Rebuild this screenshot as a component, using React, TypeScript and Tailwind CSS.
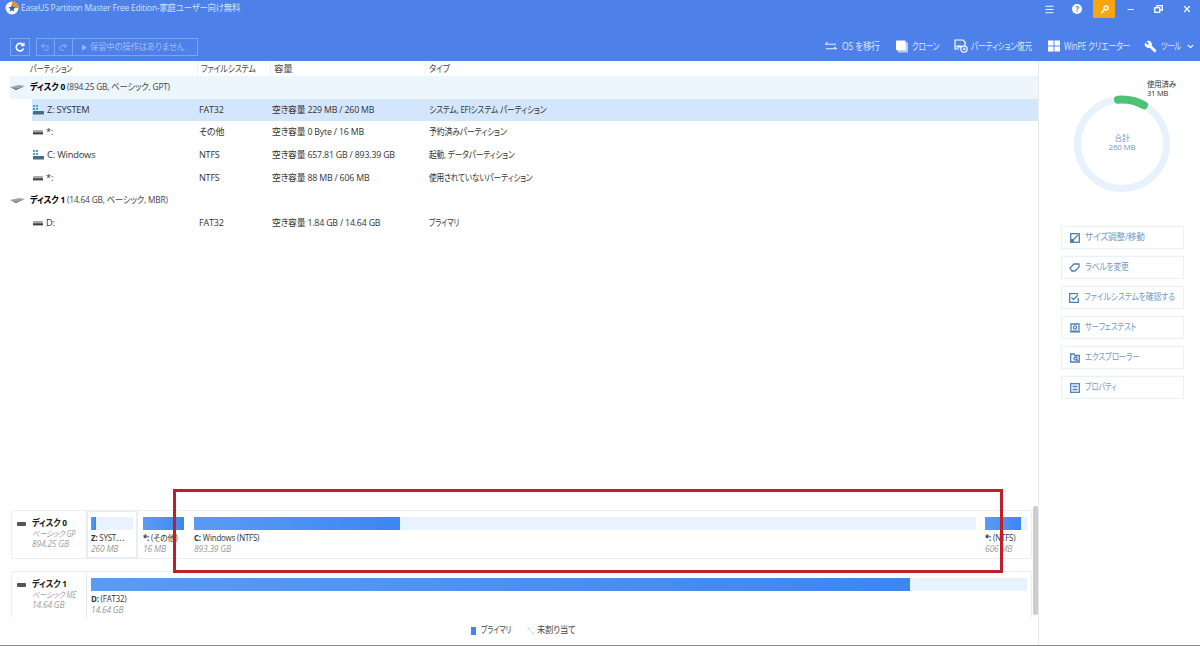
import React from "react";
import { ChevronDown, Wrench, X, Minus, Menu, Play, Undo2, Redo2 } from "lucide-react";

const S = ({ c, children }: { c: string; children: React.ReactNode }) => (
  <span className={"inline-block origin-left whitespace-nowrap " + c}>{children}</span>
);

const DiskIcon = ({ large }: { large?: boolean }) => (
  <svg width={large ? 15 : 10} height="6" viewBox="0 0 15 6" className="shrink-0" preserveAspectRatio="none">
    {large ? <path d="M0 3 L9 1 L15 2 L6 5 Z" fill="#9ca3a8" /> : <rect x="0" y="1" width="15" height="4" rx="1.5" fill="#a4a9ad" />}
    <path d={large ? "M0 3 L6 6 L15 2 L6 5 Z" : "M0 3.4 H15 V5.4 H0 Z"} fill="#3b4044" />
  </svg>
);

const WinDiskIcon = () => (
  <svg width="11" height="10" viewBox="0 0 11 10" className="shrink-0">
    <rect x="0" y="0" width="2" height="2" fill="#3aa7d8" />
    <rect x="3" y="0" width="2" height="2" fill="#3aa7d8" />
    <rect x="0" y="3" width="2" height="2" fill="#3aa7d8" />
    <rect x="3" y="3" width="2" height="2" fill="#3aa7d8" />
    <rect x="0" y="6" width="11" height="3.5" rx="0.5" fill="#4a6a80" />
  </svg>
);

const rows = [
  { kind: "disk", bold: "ディスク 0", rest: " (894.25 GB, ベーシック, GPT)" },
  { kind: "win", name: "Z: SYSTEM", fs: "FAT32", cap: "空き容量 229 MB / 260 MB", type: "システム, EFIシステム パーティション", tc: "scale-x-[0.82]", sel: true },
  { kind: "part", name: "*:", fs: "その他", cap: "空き容量 0 Byte / 16 MB", type: "予約済みパーティション", tc: "scale-x-[0.83]" },
  { kind: "win", name: "C: Windows", fs: "NTFS", cap: "空き容量 657.81 GB / 893.39 GB", type: "起動, データパーティション", tc: "scale-x-[0.81]" },
  { kind: "part", name: "*:", fs: "NTFS", cap: "空き容量 88 MB / 606 MB", type: "使用されていないパーティション", tc: "scale-x-[0.81]" },
  { kind: "disk", bold: "ディスク 1", rest: " (14.64 GB, ベーシック, MBR)" },
  { kind: "part", name: "D:", fs: "FAT32", cap: "空き容量 1.84 GB / 14.64 GB", type: "プライマリ", tc: "scale-x-[0.74]" },
];

const ToolItem = ({ icon, label, box, c, gap }: { icon: React.ReactNode; label: string; box: string; c: string; gap: string }) => (
  <div className={"flex shrink-0 items-center " + gap}>
    {icon}
    <div className={"text-[10px] leading-none text-[#dce7fa] " + box}>
      <S c={c}>{label}</S>
    </div>
  </div>
);

const SideButton = ({ icon, label, c }: { icon: React.ReactNode; label: string; c: string }) => (
  <div className="flex h-[23px] items-center gap-[5px] border border-[#e8f0f8] pl-[7px] text-[9.5px] text-[#6f9ac4]">
    <span className="flex w-[11px] justify-center">{icon}</span>
    <S c={c}>{label}</S>
  </div>
);

const Part = ({ w, fill, title, size, selected, gapClass }: { w: number; fill: number; title: React.ReactNode; size: string; selected?: boolean; gapClass: string }) => (
  <div className={"relative shrink-0 pt-[6px] " + gapClass} style={{ width: w }}>
    <div className="h-[13px] w-full bg-[#e8f3fd]">
      <div className="h-full bg-gradient-to-r from-[#5b9bf3] to-[#3d86f1]" style={{ width: fill }} />
    </div>
    <div className="mt-[2px] text-[8.5px] leading-[11px] text-[#333]">
      <S c="scale-x-[0.93]">{title}</S>
    </div>
    <div className="whitespace-nowrap text-[8.5px] italic leading-[11px] text-[#9a9a9a]">{size}</div>
    {selected && <div className="absolute bottom-[-1px] left-[-5px] right-[-5px] top-[-1px] rounded-[2px] border-2 border-[#e6eff8]" />}
  </div>
);

const DiskLabel = ({ n, type, size }: { n: string; type: string; size: string }) => (
  <div className="flex w-[75px] shrink-0 gap-[6px] border-r border-[#e6e9ec] pl-[5px] pt-[6px]">
    <div className="mt-[5px] h-[4px] w-[9px] rounded-[1px] bg-[#555]" />
    <div className="leading-[10px]">
      <div className="text-[9.5px] font-bold leading-[12px] text-[#222]"><S c="scale-x-[0.87]">{n}</S></div>
      <div className="text-[8.5px] italic text-[#a0a0a0]"><S c="scale-x-[0.86]">{type}</S></div>
      <div className="whitespace-nowrap text-[8.5px] italic text-[#a0a0a0]">{size}</div>
    </div>
  </div>
);

export default function App() {
  return (
    <div className="relative flex h-[646px] w-[1200px] flex-col overflow-hidden bg-white font-['Open_Sans','Noto_Sans_CJK_JP',sans-serif] [font-feature-settings:'palt'] tracking-[-0.2px]">
      {/* Header */}
      <header className="h-[61px] shrink-0 bg-[#4d81e9]">
        <div className="flex h-[19px] items-start">
          <svg width="14" height="14" viewBox="0 0 14 14" className="ml-[5px] mt-[1px] shrink-0">
            <circle cx="7" cy="7" r="6.5" fill="#f2f4f8" />
            <path d="M7 0.5 A6.5 6.5 0 0 1 13.5 7 H9 L7 5 Z" fill="#e8912d" />
            <path d="M7 3.5 L8 6 L10.5 6.3 L8.6 8 L9.2 10.5 L7 9.2 L4.8 10.5 L5.4 8 L3.5 6.3 L6 6 Z" fill="#2f5fa8" />
          </svg>
          <span className="ml-[2px] mt-[1px] text-[9.5px] leading-[13px] text-[#d3e0f8]">
            <S c="scale-x-[0.88]">EaseUS Partition Master Free Edition-家庭ユーザー向け無料</S>
          </span>
          <div className="ml-auto flex h-[18px] items-center text-white">
            <div className="flex w-[28px] justify-center"><Menu size={11} strokeWidth={2} /></div>
            <div className="flex w-[28px] justify-center">
              <div className="flex h-[10px] w-[10px] items-center justify-center rounded-full bg-white text-[8px] font-bold leading-none text-[#4d81e9]">?</div>
            </div>
            <div className="ml-[2px] mr-[1px] flex h-[18px] w-[22px] items-center justify-center bg-[#f9a60e]">
              <svg width="9" height="9" viewBox="0 0 9 9" fill="none" stroke="#fff" strokeWidth="1.4">
                <circle cx="6" cy="3" r="2" />
                <path d="M4.5 4.5 L1 8 M2 7 L3 8" />
              </svg>
            </div>
            <div className="flex w-[28px] justify-center pl-[1px]"><Minus size={9} strokeWidth={2.5} /></div>
            <div className="flex w-[28px] justify-center pl-[1px]">
              <svg width="9" height="8" viewBox="0 0 9 8" fill="none" stroke="#fff" strokeWidth="1.3">
                <rect x="0.7" y="2.7" width="5" height="4.6" />
                <path d="M3 2.5 V0.7 H8.3 V5 H6" />
              </svg>
            </div>
            <div className="flex w-[28px] justify-center pl-[2px]"><X size={10} strokeWidth={3} /></div>
          </div>
        </div>
        <div className="flex h-[42px] items-start pl-[10px] pr-[5px] pt-[19px]">
          <div className="flex h-[18px] w-[20px] shrink-0 items-center justify-center border border-[#7ea4ef]">
            <svg width="10" height="10" viewBox="0 0 10 10" fill="none" stroke="#fff" strokeWidth="1.6">
              <path d="M8.6 6.5 A3.8 3.8 0 1 1 8.2 3" />
              <path d="M9 0.8 V3.6 H6.2" strokeWidth="1.2" />
            </svg>
          </div>
          <div className="ml-[6px] flex h-[18px] w-[162px] shrink-0 items-center border border-[#7ea4ef] text-[#9dbbf2]">
            <div className="flex h-full w-[21px] items-center justify-center border-r border-[#7ea4ef]"><Undo2 size={10} /></div>
            <div className="flex h-full w-[21px] items-center justify-center border-r border-[#7ea4ef]"><Redo2 size={10} /></div>
            <Play size={7} fill="currentColor" className="ml-[8px]" />
            <span className="ml-[3px] text-[9.5px] leading-none"><S c="scale-x-[0.88]">保留中の操作はありません</S></span>
          </div>
          <div className="ml-auto mt-[1px] flex items-center">
            <ToolItem
              gap="gap-[5px]" box="w-[38px]" c="scale-x-[0.86]"
              label="OS を移行"
              icon={
                <svg width="12" height="11" viewBox="0 0 13 11" fill="none" stroke="#e8effc" strokeWidth="1.2">
                  <path d="M0 3 H12 M3 0.8 L0.8 3 M13 8 H1 M10 5.8 L12.2 8" />
                </svg>
              }
            />
            <div className="ml-[16px]">
              <ToolItem
                gap="gap-[4px]" box="w-[27px]" c="scale-x-[0.75]"
                label="クローン"
                icon={
                  <svg width="12" height="13" viewBox="0 0 13 13">
                    <rect x="2" y="2" width="11" height="11" fill="#b9cdf5" />
                    <rect x="0" y="0" width="10.5" height="10.5" rx="1" fill="#fff" />
                  </svg>
                }
              />
            </div>
            <div className="ml-[15px]">
              <ToolItem
                gap="gap-[3px]" box="w-[61px]" c="scale-x-[0.77]"
                label="パーティション復元"
                icon={
                  <svg width="14" height="14" viewBox="0 0 14 14" fill="none" stroke="#fff" strokeWidth="1.2">
                    <path d="M5 10 H1 V1 H9 L11 3 V6" />
                    <rect x="2.5" y="6.5" width="5" height="2" fill="#fff" stroke="none" />
                    <circle cx="10" cy="10" r="3.2" />
                    <path d="M10 8.5 V10.3 H11.5" />
                  </svg>
                }
              />
            </div>
            <div className="ml-[16px]">
              <ToolItem
                gap="gap-[4px]" box="w-[66px]" c="scale-x-[0.78]"
                label="WinPE クリエーター"
                icon={
                  <svg width="12" height="12" viewBox="0 0 13 12" fill="#fff">
                    <rect width="6" height="5.5" />
                    <rect x="7" width="6" height="5.5" />
                    <rect y="6.5" width="6" height="5.5" />
                    <rect x="7" y="6.5" width="6" height="5.5" />
                  </svg>
                }
              />
            </div>
            <div className="ml-[14px]">
              <ToolItem
                gap="gap-[4px]" box="w-[21px]" c="scale-x-[0.72]"
                label="ツール"
                icon={<Wrench size={13} fill="#fff" strokeWidth={1.5} className="-scale-x-100 text-white" />}
              />
            </div>
            <ChevronDown size={9} strokeWidth={3.5} className="ml-[4px] text-white" />
          </div>
        </div>
      </header>

      {/* Body */}
      <div className="flex min-h-0 flex-1">
        <main className="flex w-[1038px] shrink-0 flex-col">
          <div className="grid h-[15px] shrink-0 grid-cols-[197px_73px_155px_1fr] text-[9.5px] leading-[15px] text-[#444]">
            <div className="pl-[30px]"><S c="scale-x-[0.75]">パーティション</S></div>
            <div className="border-l border-[#eef0f2] pl-[3px]"><S c="scale-x-[0.83]">ファイルシステム</S></div>
            <div className="border-l border-[#eef0f2] pl-[3px]">容量</div>
            <div className="border-l border-[#eef0f2] pl-[3px]"><S c="scale-x-[0.84]">タイプ</S></div>
          </div>
          <div className="text-[9.5px] text-[#333]">
            {rows.map((r, i) =>
              r.kind === "disk" ? (
                <div key={i} className={"ml-[10px] flex h-[22.6px] items-center gap-[5px] " + (i === 0 ? "bg-[#edf5fd]" : "")}>
                  <DiskIcon large />
                  <S c="scale-x-[0.875] text-black">
                    <b>{r.bold}</b>
                    <span className="text-[#444]">{r.rest}</span>
                  </S>
                </div>
              ) : (
                <div key={i} className={"ml-[32px] grid h-[22.6px] grid-cols-[167px_73px_157px_1fr] items-center " + (r.sel ? "bg-[#d3e6fb]" : "")}>
                  <div className="flex items-center gap-[3px] pl-[1px]">
                    {r.kind === "win" ? <WinDiskIcon /> : <DiskIcon />}
                    <S c="scale-x-[0.98]">{r.name}</S>
                  </div>
                  <div><S c="scale-x-[0.95]">{r.fs}</S></div>
                  <div><S c="scale-x-[0.925]">{r.cap}</S></div>
                  <div><S c={r.tc as string}>{r.type}</S></div>
                </div>
              )
            )}
          </div>

          {/* Disk map */}
          <div className="relative mt-auto h-[135px] shrink-0 pl-[11px]">
            <div className="flex h-[49px] w-[1021px] rounded-[2px] border border-[#eceef0] pr-[5px]">
              <DiskLabel n="ディスク 0" type="ベーシック GP" size="894.25 GB" />
              <Part gapClass="ml-[4px]" w={42} fill={5} selected title={<><b>Z:</b> SYST⋯</>} size="260 MB" />
              <Part gapClass="ml-[10px]" w={41} fill={41} title={<><b>*:</b> (その他)</>} size="16 MB" />
              <Part gapClass="ml-[10px]" w={782} fill={206} title={<><b>C:</b> Windows (NTFS)</>} size="893.39 GB" />
              <Part gapClass="ml-[9px]" w={42} fill={36} title={<><b>*:</b> (NTFS)</>} size="606 MB" />
            </div>
            <div className="mt-[12px] flex h-[47px] w-[1021px] rounded-t-[2px] border border-b-0 border-[#eceef0] pr-[5px]">
              <DiskLabel n="ディスク 1" type="ベーシック ME" size="14.64 GB" />
              <Part gapClass="ml-[4px]" w={936} fill={819} title={<><b>D:</b> (FAT32)</>} size="14.64 GB" />
            </div>
            <div className="absolute left-[1033px] top-[-4px] h-[109px] w-[5px] rounded-[2px] bg-[#cdcdcd]" />
            {/* Legend */}
            <div className="flex h-[25px] items-center pl-[460px] text-[9.5px] text-[#444]">
              <div className="h-[8px] w-[5px] bg-[#3f86ee]" />
              <div className="ml-[5px] w-[33px]"><S c="scale-x-[0.74]">プライマリ</S></div>
              <svg width="8" height="8" viewBox="0 0 8 8" className="ml-[13px]">
                <rect x="0.5" y="0.5" width="2.5" height="2.5" fill="#dfe3e6" />
                <rect x="3" y="3" width="2" height="2" fill="#e8ebee" />
                <rect x="5" y="5" width="2.5" height="2.5" fill="#dfe3e6" />
              </svg>
              <div className="ml-[2px]"><S c="scale-x-[0.87]">未割り当て</S></div>
            </div>
            <div className="absolute left-[173px] top-[-21px] h-[84px] w-[830px] border-[3px] border-[#bd1f2c]" />
          </div>
        </main>

        {/* Right panel */}
        <aside className="relative flex w-[162px] shrink-0 flex-col border-l border-[#e6e9ec] pl-[22px] pr-[16px] pt-[165px]">
          <svg width="100" height="100" viewBox="0 0 100 100" className="absolute left-[33px] top-[33px]">
            <circle cx="50" cy="50" r="44.5" fill="none" stroke="#e7f2fc" strokeWidth="7" />
            <path d="M 46 5.7 A 44.5 44.5 0 0 1 72 11.3" fill="none" stroke="#4cc274" strokeWidth="8" strokeLinecap="round" />
          </svg>
          <div className="absolute left-[108px] top-[19px] text-[7.5px] leading-[9px] text-[#333]">
            <div className="whitespace-nowrap">使用済み</div>
            <div className="whitespace-nowrap">31 MB</div>
          </div>
          <div className="absolute left-[33px] top-[72px] w-[100px] text-center text-[8px] leading-[9px] text-[#6f9ac4]">
            <div>合計</div>
            <div>260 MB</div>
          </div>
          <div className="flex flex-col gap-[7px]">
            <SideButton
              label="サイズ調整/移動" c="scale-x-[0.91]"
              icon={<svg width="10" height="10" viewBox="0 0 10 10" fill="none" stroke="#4a7fb8" strokeWidth="1.3"><rect x="0.7" y="0.7" width="8.6" height="8.6" /><path d="M2 8 L8 2" /><rect x="1" y="6" width="3" height="3" fill="#4a7fb8" stroke="none" /></svg>}
            />
            <SideButton
              label="ラベルを変更" c="scale-x-[0.82]"
              icon={<svg width="11" height="9" viewBox="0 0 11 9" fill="none" stroke="#4a7fb8" strokeWidth="1.3"><path d="M1 5 L5 1 H10 V4 L6 8 H3 Z" /></svg>}
            />
            <SideButton
              label="ファイルシステムを確認する" c="scale-x-[0.83]"
              icon={<svg width="10" height="10" viewBox="0 0 10 10" fill="none" stroke="#4a7fb8" strokeWidth="1.3"><path d="M9 0.7 H0.7 V9.3 H9.3 V5" /><path d="M2.5 4.5 L4.5 6.5 L9 2" /></svg>}
            />
            <SideButton
              label="サーフェステスト" c="scale-x-[0.79]"
              icon={<svg width="10" height="10" viewBox="0 0 10 10" fill="none" stroke="#4a7fb8" strokeWidth="1.3"><path d="M1 7 V1 H9 V7" /><rect x="0" y="7.5" width="10" height="2" fill="#4a7fb8" stroke="none" /><circle cx="5" cy="4.5" r="1.6" /></svg>}
            />
            <SideButton
              label="エクスプローラー" c="scale-x-[0.79]"
              icon={<svg width="10" height="10" viewBox="0 0 10 10" fill="none" stroke="#4a7fb8" strokeWidth="1.3"><path d="M0.7 9 V1 H4 L5 2.5 H9.3 V9 Z" /><circle cx="5.5" cy="5.5" r="1.5" /><path d="M6.5 6.5 L8 8" /></svg>}
            />
            <SideButton
              label="プロパティ" c="scale-x-[0.76]"
              icon={<svg width="10" height="10" viewBox="0 0 10 10" fill="none" stroke="#4a7fb8" strokeWidth="1.3"><rect x="0.7" y="0.7" width="8.6" height="8.6" /><path d="M2.5 3.5 H7.5 M2.5 6.5 H7.5" /></svg>}
            />
          </div>
        </aside>
      </div>
      <div className="h-[1px] shrink-0 bg-[#8a8a8a]" />
    </div>
  );
}
